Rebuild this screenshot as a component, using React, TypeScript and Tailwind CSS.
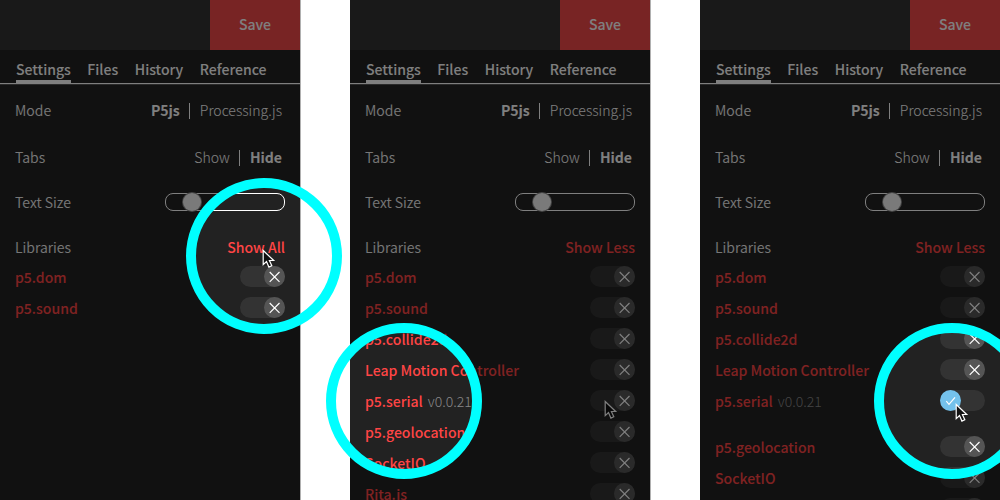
import React from 'react';

type Library = { name: string; version?: string; on?: boolean; tall?: boolean };
type Point = { x: number; y: number };

const all: Library[] = [
  { name: 'p5.dom' },
  { name: 'p5.sound' },
  { name: 'p5.collide2d' },
  { name: 'Leap Motion Controller' },
  { name: 'p5.serial', version: 'v0.0.21' },
  { name: 'p5.geolocation' },
  { name: 'SocketIO' },
  { name: 'Rita.js' },
];

const enabled: Library[] = all.map((l) => (l.version ? { ...l, on: true, tall: true } : l));

function Toggle({ on }: { on?: boolean }) {
  return (
    <span className={`flex h-[21px] w-[45px] items-center rounded-full bg-[#333] ${on ? 'justify-start' : 'justify-end'}`}>
      <span className={`flex size-[21px] items-center justify-center rounded-full ${on ? 'bg-[#74c2ec]' : 'bg-[#555]'}`}>
        <svg width="21" height="21" viewBox="0 0 21 21" fill="none" stroke="#fff" strokeWidth="1.2">
          {on ? <path d="M6.3 11.2l2.7 3.2 6-7" /> : <path d="M5.7 6l9.8 9.8M15.5 6l-9.8 9.8" />}
        </svg>
      </span>
    </span>
  );
}

function Cursor({ x, y }: Point) {
  return (
    <svg className="absolute" style={{ left: x, top: y }} width="14" height="20" viewBox="0 0 14 20">
      <path d="M1.2 1.5v14.2l3.3-3.1 2.4 5.5 2.9-1.3-2.4-5.3h4.3z" fill="#111" stroke="#fff" strokeWidth="1.2" />
    </svg>
  );
}

function Choice({ label, left, right, leftActive }: { label: string; left: string; right: string; leftActive?: boolean }) {
  return (
    <div className="flex items-center justify-between pl-[15px] pr-[18px]">
      <span className="font-[350] text-[#eee]">{label}</span>
      <span className="flex items-center gap-2">
        <span className={leftActive ? 'font-bold' : 'font-light'}>{left}</span>
        <span className="flex w-1 justify-center pt-0.5">
          <span className="h-4 w-px bg-white" />
        </span>
        <span className={leftActive ? 'font-light' : 'font-bold'}>{right}</span>
      </span>
    </div>
  );
}

function Panel({ libraries, action, cursor, spot }: { libraries: Library[]; action: string; cursor: Point; spot: Point }) {
  return (
    <section className="relative h-[500px] w-[300px] shrink-0 shadow-[1px_0_0_#b0b0b0]">
      <div className="relative flex h-full flex-col overflow-hidden bg-[#222] text-[14.05px] leading-5 text-white">
        <header className="flex h-[50px] shrink-0 justify-end bg-[#333]">
          <button className="flex w-[90px] items-center justify-center bg-[#f04949] pb-0.5 font-medium">Save</button>
        </header>
        <nav className="flex h-[34px] shrink-0 items-end gap-[16.5px] border-b border-white pl-4 font-medium shadow-[0_1px_0_#555]">
          <span className="border-b-[3px] border-white pb-px">Settings</span>
          <span className="pb-1">Files</span>
          <span className="pb-1">History</span>
          <span className="pb-1">Reference</span>
        </nav>
        <div className="flex shrink-0 flex-col gap-[27px] pt-4">
          <Choice label="Mode" left="P5js" right="Processing.js" leftActive />
          <Choice label="Tabs" left="Show" right="Hide" />
        </div>
        <div className="mt-[25px] flex shrink-0 items-center justify-between px-[15px]">
          <span className="font-[350] text-[#eee]">Text Size</span>
          <span className="flex h-[18px] w-[120px] items-center rounded-[8px] border border-white pl-[17px]">
            <span className="size-[18px] rounded-full bg-[#f4f4f4] ring-1 ring-[#888]" />
          </span>
        </div>
        <div className="mt-[25px] flex shrink-0 items-center justify-between px-[15px]">
          <span className="font-[350] text-[#eee]">Libraries</span>
          <span className="font-medium text-[#ff4545]">{action}</span>
        </div>
        <ul className="mt-1 shrink-0 px-[15px]">
          {libraries.map((l) => (
            <li key={l.name} className={`flex items-start justify-between ${l.tall ? 'h-[46px]' : 'h-[31px]'}`}>
              <span className="flex h-[31px] items-center gap-[5px]">
                <span className="font-medium text-[#ff4545]">{l.name}</span>
                {l.version && <span className="font-light text-[#888]">{l.version}</span>}
              </span>
              <span className="flex h-[31px] items-center">
                <Toggle on={l.on} />
              </span>
            </li>
          ))}
        </ul>
        <Cursor {...cursor} />
        <div
          className="absolute size-[150px] rounded-full shadow-[0_0_0_800px_rgba(0,0,0,0.5)]"
          style={{ left: spot.x - 75, top: spot.y - 75 }}
        />
      </div>
      <div
        className="absolute z-10 size-[156px] rounded-full border-[10px] border-[#00ffff]"
        style={{ left: spot.x - 78, top: spot.y - 78 }}
      />
    </section>
  );
}

export default function App() {
  return (
    <main className="flex h-[500px] w-[1000px] gap-[50px] overflow-hidden bg-white font-['Noto_Sans_CJK_SC','Noto_Sans',sans-serif]">
      <Panel libraries={all.slice(0, 2)} action="Show All" cursor={{ x: 261.5, y: 249 }} spot={{ x: 264, y: 256 }} />
      <Panel libraries={all} action="Show Less" cursor={{ x: 254, y: 400 }} spot={{ x: 54, y: 401 }} />
      <Panel libraries={enabled} action="Show Less" cursor={{ x: 255, y: 403 }} spot={{ x: 252, y: 401 }} />
    </main>
  );
}
